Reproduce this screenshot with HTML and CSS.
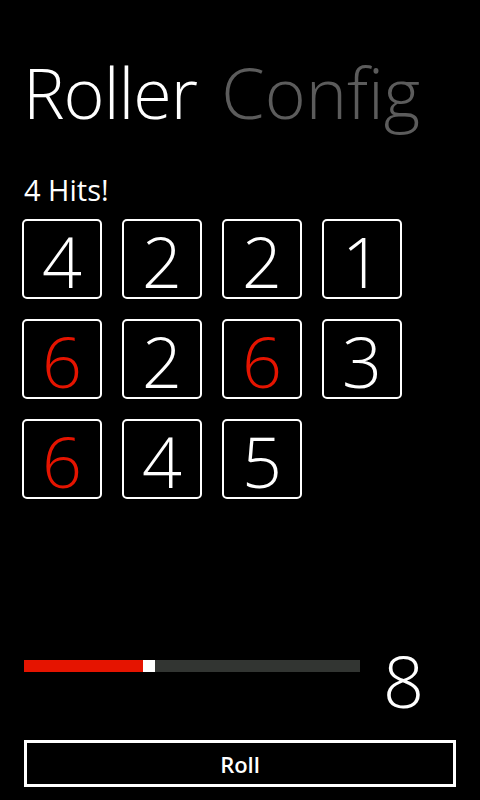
FILE: index.html
```html
<!DOCTYPE html>
<html>
<head>
<meta charset="utf-8">
<link rel="stylesheet" href="styles.css">
</head>
<body>
<div class="page">
  <h1 class="title"><span class="active">Roller</span> <span class="inactive">Config</span></h1>
  <div class="hits">4 Hits!</div>
  <div class="dice">
    <div class="die">4</div>
    <div class="die">2</div>
    <div class="die">2</div>
    <div class="die">1</div>
    <div class="die hit">6</div>
    <div class="die">2</div>
    <div class="die hit">6</div>
    <div class="die">3</div>
    <div class="die hit">6</div>
    <div class="die">4</div>
    <div class="die">5</div>
  </div>
  <div class="spacer"></div>
  <div class="slider-row">
    <div class="slider">
      <div class="fill"></div>
      <div class="thumb"></div>
      <div class="rest"></div>
    </div>
    <div class="count">8</div>
  </div>
  <button class="roll">Roll</button>
</div>
</body>
</html>
```
FILE: styles.css
```css
html, body {
  margin: 0;
  padding: 0;
  background: #000;
  height: 100%;
}
body {
  font-family: "Open Sans", "Noto Sans", sans-serif;
  color: #fff;
}
.page {
  height: 800px;
  display: flex;
  flex-direction: column;
  box-sizing: border-box;
}
.title {
  margin: 44px 0 0 23px;
  font-size: 70px;
  font-weight: 300;
  line-height: 96px;
  white-space: nowrap;
  word-spacing: 6px;
}
.active { color: #fff; letter-spacing: -1px; }
.inactive { color: #5c5c5c; letter-spacing: 0; }
.hits {
  margin: 32px 0 0 24px;
  font-size: 29px;
  font-weight: 400;
  line-height: 36px;
}
.dice {
  margin: 11px 0 0 22px;
  display: grid;
  grid-template-columns: repeat(4, 80px);
  grid-auto-rows: 80px;
  gap: 20px;
}
.die {
  box-sizing: border-box;
  border: 2px solid #fff;
  border-radius: 5px;
  display: flex;
  align-items: center;
  justify-content: center;
  font-size: 70px;
  font-weight: 300;
  line-height: 1;
  color: #fff;
  padding-top: 4px;
}
.die.hit { color: #e51400; }
.spacer { flex: 1; }
.slider-row {
  display: flex;
  align-items: flex-start;
  margin: 0 0 0 24px;
  height: 80px;
}
.slider {
  display: flex;
  width: 336px;
  height: 12px;
  margin-top: 0;
}
.fill { width: 119px; background: #e51400; }
.thumb { width: 12px; background: #fff; }
.rest { flex: 1; background: #323532; }
.count {
  margin-left: 23px;
  font-size: 72px;
  font-weight: 300;
  line-height: 1;
  margin-top: -16px;
}
.roll {
  margin: 0 24px 13px 24px;
  height: 47px;
  background: #000;
  border: 3px solid #fff;
  color: #fff;
  font-family: "Open Sans", "Noto Sans", sans-serif;
  font-size: 22px;
  font-weight: 600;
  padding: 0;
}
```
